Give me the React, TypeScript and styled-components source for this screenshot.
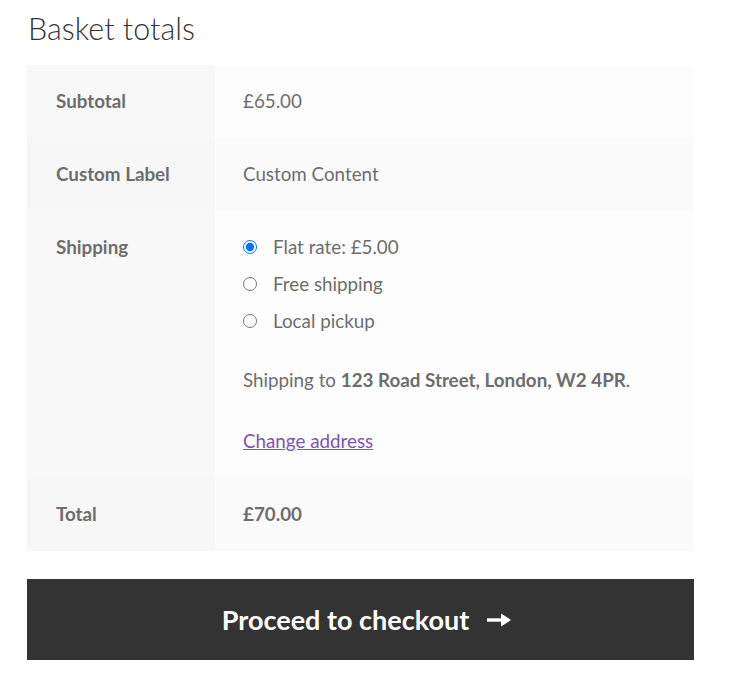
import React from 'react';
import styled, {createGlobalStyle} from 'styled-components';

const GlobalStyle = createGlobalStyle`
  html, body {
    margin: 0;
    padding: 0;
    background: #ffffff;
  }
  body {
    font-family: Lato, "Liberation Sans", sans-serif;
    color: #6d6d6d;
  }
`;

type Row = {
  label: string;
  content: React.ReactNode;
  strong?: boolean;
};

const shippingOptions = [
  {id: 'flat', label: 'Flat rate: £5.00', checked: true},
  {id: 'free', label: 'Free shipping', checked: false},
  {id: 'pickup', label: 'Local pickup', checked: false},
];

const ArrowIcon = () => (
  <svg width="24" height="14" viewBox="0 0 24 14" aria-hidden>
    <rect x="0" y="5.3" width="16" height="3.4" fill="#ffffff" />
    <polygon points="14,0.5 24,7 14,13.5" fill="#ffffff" />
  </svg>
);

const ShippingContent = () => (
  <>
    <OptionList>
      {shippingOptions.map((o) => (
        <Option key={o.id}>
          <Radio type="radio" name="shipping" defaultChecked={o.checked} />
          <span>{o.label}</span>
        </Option>
      ))}
    </OptionList>
    <Destination>
      Shipping to <strong>123 Road Street, London, W2 4PR</strong>.
    </Destination>
    <ChangeLink href="#">Change address</ChangeLink>
  </>
);

const rows: Row[] = [
  {label: 'Subtotal', content: '£65.00'},
  {label: 'Custom Label', content: 'Custom Content'},
  {label: 'Shipping', content: <ShippingContent />},
  {label: 'Total', content: '£70.00', strong: true},
];

export default function App() {
  return (
    <Page>
      <GlobalStyle />
      <Title>Basket totals</Title>
      <Totals>
        <tbody>
          {rows.map((r, i) => (
            <tr key={r.label}>
              <Label $even={i % 2 === 1}>{r.label}</Label>
              <Value $even={i % 2 === 1} $strong={r.strong}>
                {r.content}
              </Value>
            </tr>
          ))}
        </tbody>
      </Totals>
      <CheckoutButton href="#">
        Proceed to checkout
        <ArrowIcon />
      </CheckoutButton>
    </Page>
  );
}

const Page = styled.div`
  width: 667px;
  padding: 0 0 0 27px;
`;

const Title = styled.h2`
  margin: 0;
  padding: 8px 0 17px 1px;
  font-family: Lato, "Liberation Sans", sans-serif;
  font-weight: 300;
  font-size: 30.5px;
  line-height: 40px;
  color: #333333;
`;

const Totals = styled.table`
  width: 667px;
  border-collapse: collapse;
  border-spacing: 0;
  font-size: 18.8px;
  line-height: 27px;
  margin-bottom: 28px;
`;

const Label = styled.th<{$even?: boolean}>`
  width: 130px;
  padding: 22px 29px 24px;
  text-align: left;
  vertical-align: top;
  font-weight: 700;
  background: ${(p) => (p.$even ? '#f7f7f7' : '#f8f8f8')};
  color: #6d6d6d;
`;

const Value = styled.td<{$even?: boolean; $strong?: boolean}>`
  padding: 22px 28px 24px;
  vertical-align: top;
  font-weight: ${(p) => (p.$strong ? 700 : 400)};
  background: ${(p) => (p.$even ? '#fbfbfb' : '#fdfdfd')};
`;

const OptionList = styled.ul`
  list-style: none;
  margin: 0 0 27px;
  padding: 0;
`;

const Option = styled.li`
  display: flex;
  align-items: center;
  gap: 16px;
  height: 37px;
  margin-top: -5px;
  & + & {
    margin-top: 0;
  }
`;

const Radio = styled.input`
  width: 14px;
  height: 14px;
  margin: 0;
  accent-color: #0075ff;
`;

const Destination = styled.p`
  margin: 0 0 34px;
  strong {
    font-weight: 700;
  }
`;

const ChangeLink = styled.a`
  display: inline-block;
  color: #7f54b3;
  text-decoration: underline;
`;

const CheckoutButton = styled.a`
  display: flex;
  align-items: center;
  justify-content: center;
  gap: 18px;
  width: 667px;
  height: 81px;
  box-sizing: border-box;
  padding-left: 12px;
  background: #333333;
  color: #ffffff;
  font-size: 27px;
  font-weight: 700;
  text-decoration: none;
`;
